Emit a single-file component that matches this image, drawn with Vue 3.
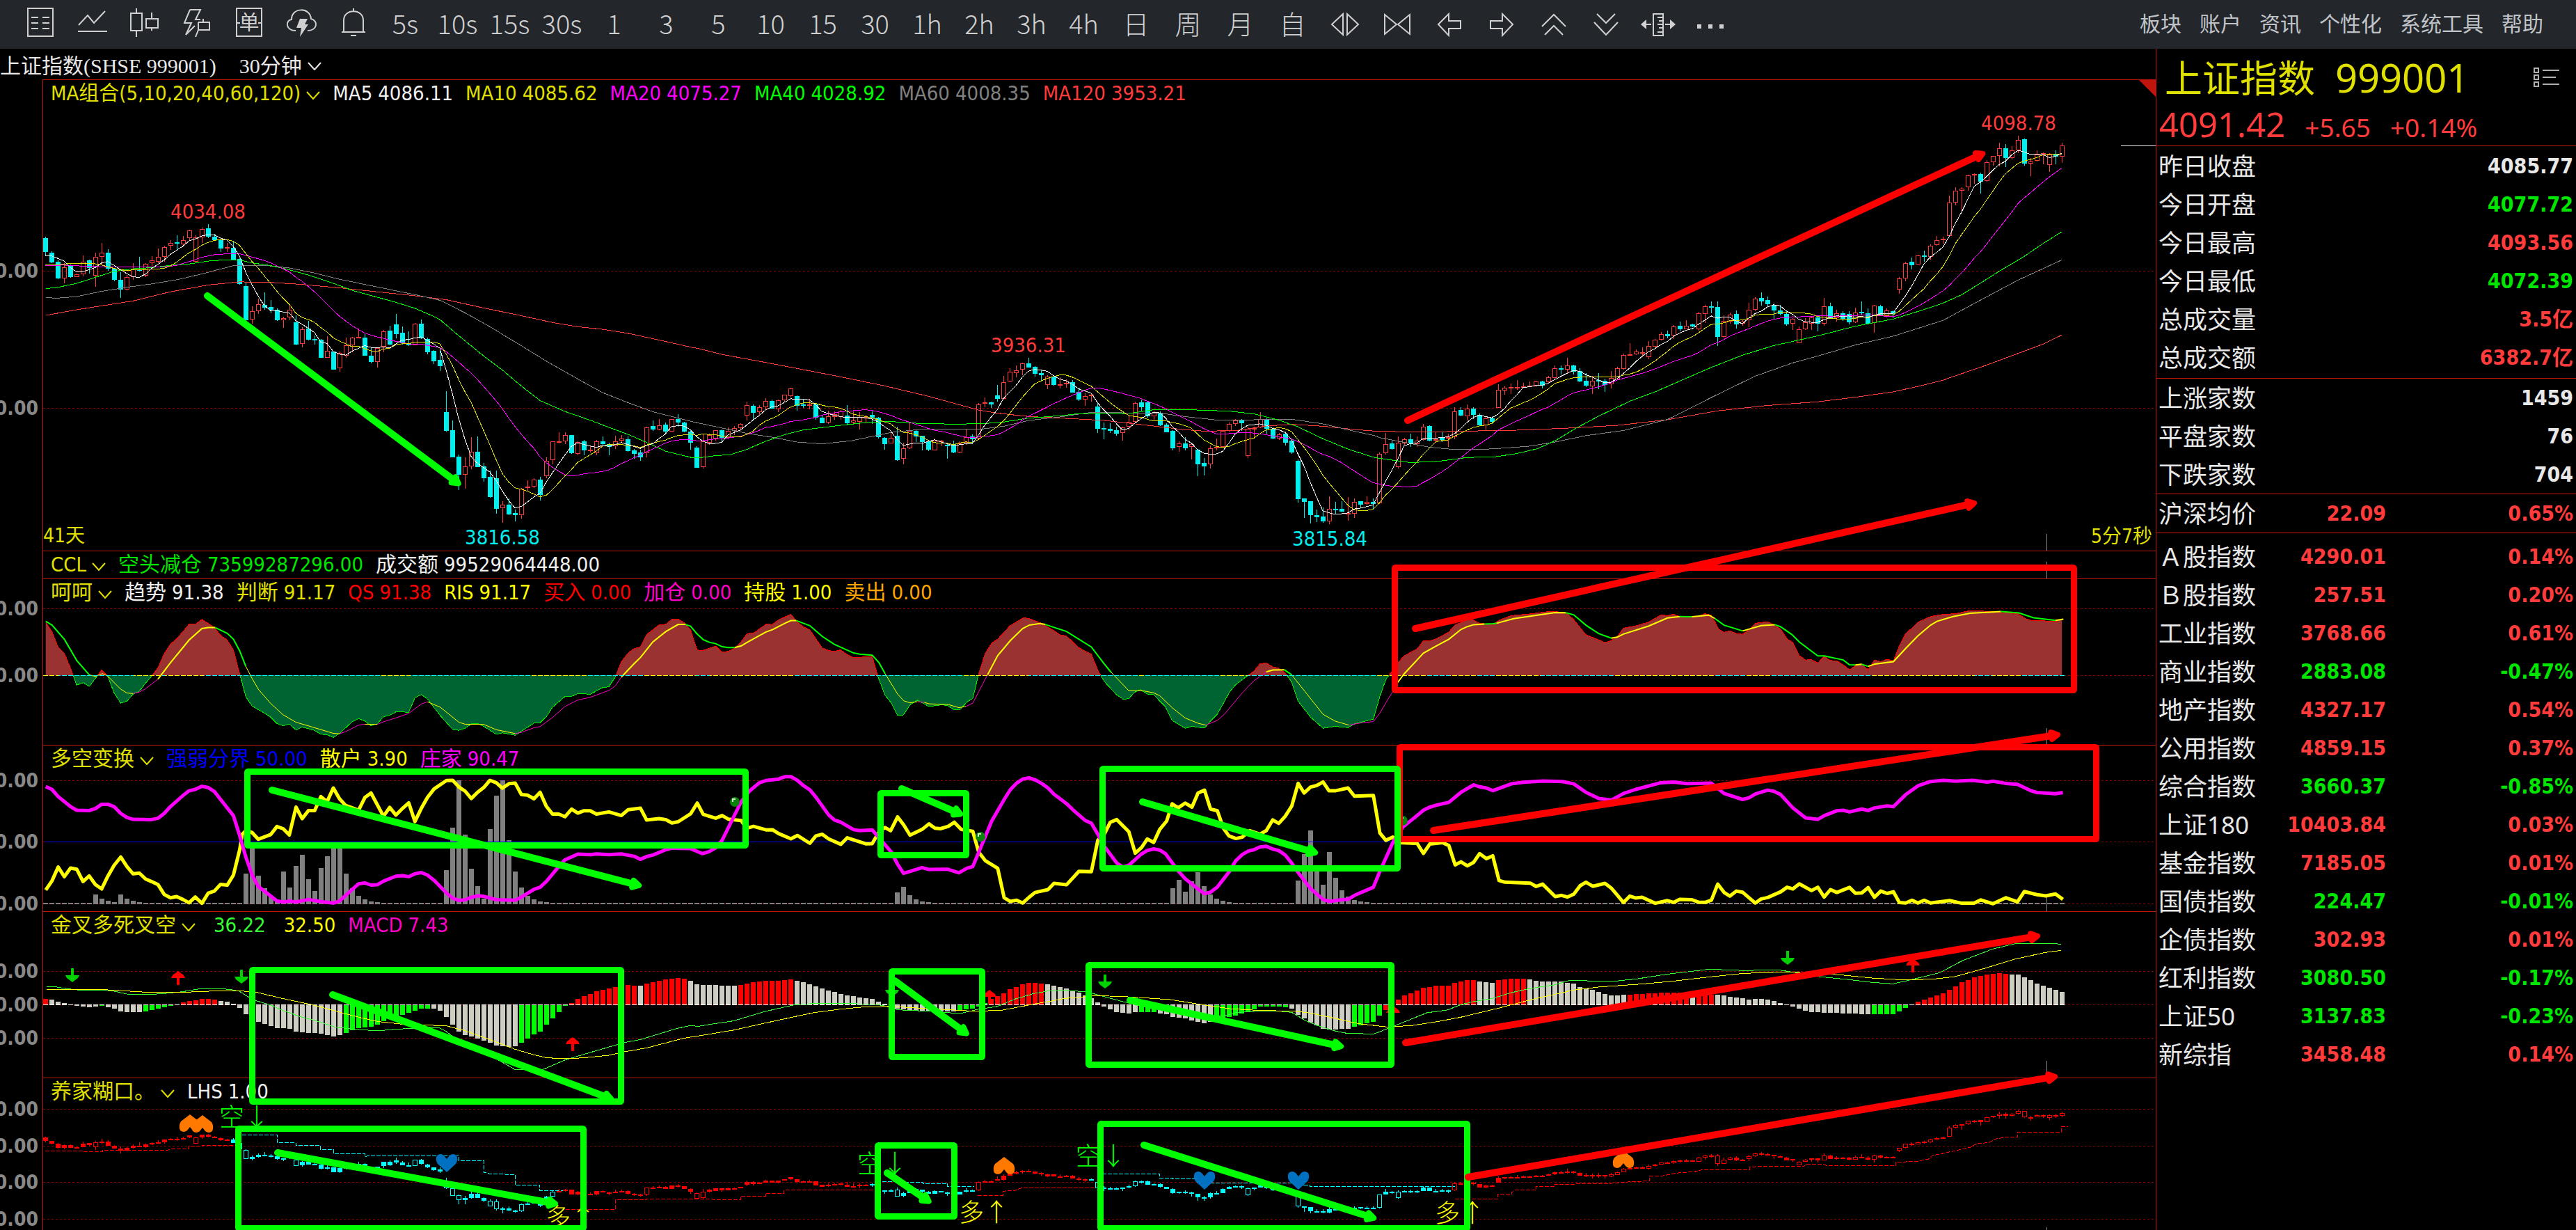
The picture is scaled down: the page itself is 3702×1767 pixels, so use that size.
<script setup>
const FIRST_X = 65
const STEP = 9

// Readings are stored in batches; each batch has its own origin and scale.
const batch = (x0, kx, y0, ky) => ({ x0, kx, y0, ky })
const priceA = batch(0, 0.6378, 160, 0.4082)
const priceB = batch(1000, 0.6378, 400, 0.3333)
const priceC = batch(1980, 0.7143, 160, 0.4082)
const oscA = batch(0, 0.6378, 780, 0.3444)
const oscB = batch(1000, 0.6633, 780, 0.3444)
const oscC = batch(2000, 0.7015, 780, 0.3444)
const lowA = batch(0, 0.8929, 1300, 0.3333)
const lowB = batch(1400, 1.0842, 1300, 0.3333)

const points = (b, text) =>
  text.trim().split(/\s+/).map((pair) => {
    const [x, y] = pair.split(',').map(Number)
    return [b.x0 + x * b.kx, b.y0 + y * b.ky]
  })
const join = (...parts) => parts.flatMap(([b, text]) => points(b, text))
const poly = (pts) => pts.map(([x, y]) => `${x.toFixed(1)},${y.toFixed(1)}`).join(' ')
const valueAt = (pts, x) => {
  if (x <= pts[0][0]) return pts[0][1]
  for (let i = 1; i < pts.length; i++) {
    if (x <= pts[i][0]) {
      const [xa, ya] = pts[i - 1]
      const [xb, yb] = pts[i]
      return xb === xa ? yb : ya + ((yb - ya) * (x - xa)) / (xb - xa)
    }
  }
  return pts[pts.length - 1][1]
}

// Candles: direction, high, body top, body bottom, low.
const readCandles = (b, text) =>
  text.trim().split(/\s*;\s*/).filter(Boolean).map((row) => {
    const [dir, ...v] = row.split(' ')
    const [high, top, bottom, low] = v.map((n) => b.y0 + Number(n) * b.ky)
    return { up: dir === 'U', high: Math.min(high, top), top, bottom, low: Math.max(low, bottom) }
  })

const candles = [
  ...readCandles(priceA, `
D 441 447 496 510;D 492 497 531 535;D 523 529 588 590;U 535 548 588 605;D 540 544 583 585;U 570 574 582 584;U 506 528 574 580;D 523 524 551 570;U 497 513 579 617;U 463 498 512 540;
D 486 498 553 560;D 552 554 594 598;D 567 593 626 657;U 575 582 626 629;U 535 556 582 593;D 512 557 562 563;U 533 536 579 584;U 510 525 534 545;U 483 513 530 533;U 473 477 513 528;
U 453 464 474 487;D 436 461 465 490;U 438 452 467 470;U 416 420 447 455;U 436 443 528 530;U 409 413 444 462;D 397 412 441 445;D 431 440 453 455;D 447 453 482 495;U 464 478 482 495;
D 458 479 522 523;D 517 519 608 610;D 600 615 735 737;U 685 704 732 747;U 658 679 702 714;D 637 680 691 697;D 665 689 699 710;D 694 698 735 738;U 722 727 734 762;U 684 697 725 735;
D 718 742 821 822;U 760 766 819 830;D 738 765 804 806;D 790 801 805 820;D 800 804 866 868;U 792 843 866 868;D 844 846 908 910;U 845 851 905 916;U 795 822 860 868;U 794 796 822 848;
U 765 794 797 798;D 785 797 859 861;D 832 860 882 888;U 838 832 883 902;U 769 773 829 848;D 755 772 820 822;D 714 750 783 798;D 756 779 816 820;D 775 817 822 826;U 744 746 822 824;
D 733 746 799 802;D 797 802 847 854;D 840 843 879 890;D 840 875 896 914;D 984 1058 1124 1127;D 1088 1122 1217 1218;D 1207 1214 1280 1333;U 1218 1250 1279 1328;U 1147 1197 1250 1260;D 1143 1197 1251 1253;
D 1237 1250 1290 1303;D 1265 1286 1358 1360;D 1263 1291 1398 1415;U 1372 1383 1397 1447;D 1363 1384 1419 1422;D 1401 1414 1422 1443;U 1325 1329 1422 1433;U 1298 1321 1325 1338;U 1290 1295 1321 1325;D 1287 1297 1350 1369;
U 1217 1231 1283 1290;U 1160 1162 1228 1243;U 1129 1160 1165 1168;U 1130 1140 1161 1170;D 1138 1140 1204 1206;U 1160 1163 1205 1210;D 1156 1161 1194 1210;U 1175 1190 1194 1200;U 1157 1160 1203 1209;D 1143 1160 1172 1175;
D 1165 1172 1180 1209;U 1142 1162 1179 1188;U 1138 1152 1159 1168;D 1143 1154 1195 1198;D 1188 1194 1205 1223;D 1191 1201 1217 1231;U 1110 1112 1203 1217;D 1088 1107 1119 1124;U 1084 1105 1119 1122;D 1096 1103 1127 1131;
U 1083 1084 1126 1127;D 1066 1084 1095 1110;D 1092 1094 1127 1129;D 1122 1126 1165 1190`),
  ...readCandles(priceB, `
D 723 729 815 816;U 668 703 812 818;U 668 676 707 718;U 653 655 691 700;D 652 654 686 705;U 643 656 688 690;
U 637 646 656 675;U 624 626 644 655;U 531 547 592 613;D 543 549 578 608;U 545 556 575 587;U 517 529 556 565;D 523 528 560 562;U 522 526 563 575;U 500 502 524 530;U 470 475 506 513;
D 505 507 548 570;D 523 542 549 557;U 519 543 548 565;D 540 542 601 608;D 590 600 624 625;U 570 595 622 628;U 573 586 596 608;U 568 572 597 608;D 546 591 624 632;U 572 613 620 630;
U 575 597 617 650;U 587 597 600 622;D 573 588 601 628;D 597 600 684 690;D 685 687 713 737;U 663 688 710 712;D 639 678 783 786;U 708 731 778 800;U 622 657 731 735;D 655 657 681 705;
D 677 678 704 740;D 700 703 737 744;U 690 699 740 742;U 695 700 704 722;D 710 717 722 776;D 700 713 749 753;U 703 712 749 752;U 650 683 709 718;D 672 682 693 713;U 538 544 690 695;
U 513 534 539 555;D 531 534 542 558;D 459 504 518 530;U 421 448 518 522;U 387 403 445 447;U 374 397 407 425;U 362 367 392 416;D 342 366 383 385;D 378 381 410 422;D 393 408 417 443;
U 418 424 460 476;D 420 423 459 462;U 425 457 461 473;U 436 449 457 470;D 438 447 491 493;D 470 490 521 527;U 495 508 521 548;U 498 502 506 530;D 537 553 648 665;D 622 645 651 692;
D 624 648 656 666;D 640 654 668 678;U 640 641 667 698;U 590 619 640 653;U 532 538 619 625;D 522 535 556 570;D 532 534 593 600;U 570 578 593 609;D 573 580 632 636;D 623 630 662 663;
D 655 657 732 740;U 702 710 727 747;D 683 711 731 742;U 708 714 727 781;D 736 738 801 852;D 775 795 809 849;U 720 733 802 819;U 691 725 733 740;U 655 658 727 730;U 622 626 657 660;
U 606 613 627 637;D 605 613 623 657;U 640 647 764 773;U 640 645 648 684;U 576 606 641 645;D 603 609 647 668;D 642 647 690 693;U 667 673 691 696;D 660 669 708 720;D 690 699 750 756;
D 780 786 950 966;D 948 949 963 1031;D 959 961 1020 1056;D 995 1020 1028 1049;D 987 1026 1047 1052;U 939 993 1046 1058;D 963 993 998 1015;D 960 993 1005 1008;U 942 1011 1016 1043;U 948 962 1013 1031;
D 961 961 975 990;U 939 964 973 977;D 948 963 972 992;U 750 755 968 973`),
  ...readCandles(priceC, `
U 1132 1170 1202 1207;D 1157 1169 1188 1191;U 1144 1166 1251 1257;U 1149 1155 1168 1174;D 1134 1154 1169 1181;U 1145 1158 1171 1181;
U 1100 1109 1156 1158;D 1106 1107 1159 1160;U 1127 1155 1159 1165;D 1126 1146 1157 1164;U 1134 1147 1151 1180;U 1041 1055 1147 1153;D 1040 1051 1071 1073;U 1031 1046 1072 1088;D 1041 1046 1068 1082;D 1062 1068 1106 1107;
U 1075 1080 1106 1122;D 1072 1080 1093 1100;U 960 979 1043 1044;U 968 972 982 997;U 958 971 973 994;U 946 970 973 979;U 955 967 970 972;U 950 966 968 970;U 947 950 966 970;D 948 950 964 976;
U 930 937 952 958;U 894 905 939 941;D 893 904 908 925;U 866 895 909 922;D 892 894 915 925;D 905 914 950 952;D 920 948 965 971;U 930 948 967 994;D 921 946 951 978;D 941 948 962 987;
U 914 939 960 974;U 898 903 942 944;U 853 858 906 909;U 816 855 858 860;U 837 846 856 858;U 831 847 850 865;U 808 825 864 873;U 800 804 827 830;U 777 783 803 805;D 771 783 791 798;
U 752 756 789 801;D 741 755 767 774;U 734 754 766 768;D 748 750 757 759;U 706 711 766 772;U 681 687 714 745;D 669 685 690 710;D 670 688 794 826;U 718 738 793 795;U 708 715 740 748;
D 700 714 750 764;U 732 740 748 755;U 674 697 734 759;U 653 658 697 703;D 637 657 669 684;D 652 664 679 686;D 677 680 700 733;D 682 700 714 717;D 703 713 749 755;U 728 729 746 770;
U 757 766 815 816;U 728 743 768 770;U 720 725 746 769;D 720 724 748 774;U 657 685 748 755;D 674 685 729 731;U 697 711 728 740;D 702 710 733 737;D 702 713 742 750;U 690 708 743 745;
D 669 706 709 715;D 693 710 746 750;U 680 683 744 779;D 680 685 717 720;U 694 701 720 725;D 700 703 713 727;U 582 589 626 642;U 530 533 587 598;D 514 530 541 556;U 505 507 538 540;
D 489 506 512 530;U 468 472 511 523;U 438 452 471 474;U 440 448 452 468;U 296 321 438 440;U 268 280 320 331;U 268 271 280 349;U 222 226 268 280;U 219 221 226 255;D 216 220 247 289;
U 172 180 246 248;U 157 158 180 191;U 110 130 158 194;D 115 131 163 197;U 122 136 163 168;U 86 101 136 147;D 96 97 183 191;U 163 177 183 228;U 138 152 175 176;U 144 148 153 186;
U 147 153 188 212;D 137 150 160 186;U 110 121 160 181`),
]

const candleShape = (i, c, hollow) => {
  const x = FIRST_X + STEP * i
  const t = Math.round(c.top)
  const h = Math.max(2, Math.round(c.bottom) - t)
  const wick = `M${x + 0.5} ${Math.round(c.high)}V${t}M${x + 0.5} ${t + h}V${Math.round(c.low)}`
  return hollow
    ? { wick, body: `M${x - 2.5} ${t + 0.5}h6v${h - 1}h-6z` }
    : { wick, body: `M${x - 3} ${t}h7v${h}h-7z` }
}
const collect = (list) => ({
  wick: list.map((s) => s.wick).join(''),
  body: list.map((s) => s.body).join(''),
})
const shapes = candles.map((c, i) => ({ c, i, ...candleShape(i, c, c.up) }))
const rising = collect(shapes.filter((s) => s.c.up))
const falling = collect(shapes.filter((s) => !s.c.up))

// The bottom pane repeats the candles on a compressed scale, coloured by trend.
const squash = (y) => 1543 + y * 0.2658
const bearish = (i) => (i >= 30 && i <= 81) || (i >= 132 && i <= 148) || (i >= 167 && i <= 224)
const trend = candles.map((c, i) => {
  const s = { up: c.up, high: squash(c.high), top: squash(c.top), bottom: squash(c.bottom), low: squash(c.low) }
  const hollow = s.bottom - s.top > 7 || (i > 245 && c.up)
  return { hollow, cold: bearish(i), ...candleShape(i, s, hollow) }
})
const trendSets = [
  { color: '#ff0000', fill: 'none', ...collect(trend.filter((t) => !t.cold && t.hollow)) },
  { color: '#ff0000', fill: '#ff0000', ...collect(trend.filter((t) => !t.cold && !t.hollow)) },
  { color: '#00ffff', fill: 'none', ...collect(trend.filter((t) => t.cold && t.hollow)) },
  { color: '#00ffff', fill: '#00ffff', ...collect(trend.filter((t) => t.cold && !t.hollow)) },
]

const closes = candles.map((c) => (c.up ? c.top : c.bottom))
const average = (n, lead) => {
  const start = points(priceA, lead)
  return poly(closes.map((_, i) => {
    const x = FIRST_X + STEP * i
    if (i < n - 1) return [x, valueAt(start, x)]
    let sum = 0
    for (let k = i - n + 1; k <= i; k++) sum += closes[k]
    return [x, sum / n]
  }))
}
const averages = [
  { color: '#ff3b3b', pts: poly(join(
    [priceA, '103,718 173,698 300,667 384,635 469,611 540,600 610,602 680,609 765,621 850,635 935,649 1006,663 1090,692 1160,714 1245,743 1302,758 1358,767 1415,781 1500,810 1560,831'],
    [priceB, '3,301 60,328 143,357 228,388 326,424 425,463 524,508 637,567 680,581 750,595 863,606 920,612 1018,633 1100,652 1145,658 1216,656 1286,636 1343,629 1413,637 1484,651 1530,658'],
    [priceC, '3,1126 104,1129 155,1126 280,1122 381,1115 482,1105 583,1085 684,1054 784,1035 885,1022 961,1006 1037,987 1087,968 1137,946 1150,938 1225,893 1288,852 1340,818 1376,787'])) },
  { color: '#808080', pts: poly(join(
    [priceA, '103,656 131,657 173,652 229,633 286,619 342,607 400,592 455,572 526,543 596,542 652,551 709,569 765,591 822,609 878,627 935,645 992,665 1048,709 1104,758 1175,825 1231,879 1302,942 1358,990 1415,1025 1471,1057 1560,1092'],
    [priceB, '3,622 60,645 115,668 171,684 228,705 284,713 350,700 397,681 440,664 510,650 637,651 694,637 750,612 820,597 891,577 990,580 1046,581 1110,597 1173,610 1258,609 1343,607 1413,627 1484,659 1535,680'],
    [priceC, '3,1148 54,1165 104,1182 155,1190 205,1190 255,1185 306,1178 356,1164 419,1141 495,1123 583,1084 621,1052 671,1007 759,932 835,885 885,861 961,822 1037,791 1137,736 1213,664 1288,594 1376,523'])) },
  { color: '#00ff00', pts: poly(join(
    [priceA, '103,624 131,619 173,605 215,584 257,563 300,554 342,550 384,542 426,537 469,527 512,522 540,523 568,533 610,543 638,552 695,576 751,605 794,630 850,654 892,672 935,693 978,722 992,734 1034,790 1090,861 1132,910 1175,967 1217,1018 1273,1056 1330,1087 1372,1112 1415,1137 1457,1165 1500,1196 1560,1219'],
    [priceB, '3,774 40,765 78,759 115,737 157,702 200,673 242,653 284,643 340,630 397,619 440,617 510,626 595,628 680,623 750,602 820,592 863,583 976,582 1032,566 1110,566 1201,572 1258,584 1314,611 1357,640 1413,691 1470,736 1526,770'],
    [priceC, '3,1221 66,1236 120,1232 180,1218 235,1216 280,1204 322,1187 360,1156 400,1114 444,1073 507,1020 558,987 621,939 671,901 734,858 797,824 885,790 961,756 1037,731 1087,704 1137,675 1175,645 1213,604 1250,563 1300,511 1340,463 1376,424'])) },
  { color: '#ff00ff', pts: average(20, '103,543 145,541 190,545 243,547 370,548') },
  { color: '#e0e000', pts: average(10, '103,541 145,537 173,535 229,537') },
  { color: '#f0f0f0', pts: average(5, '103,508 117,509 131,518 150,530') },
]

// Oscillator pane.
const fast = join(
  [oscA, '103,330 117,370 131,434 145,460 159,522 173,593 187,583 201,598 215,565 229,530 243,556 257,625 272,668 286,660 300,630 314,618 328,585 342,555 356,520 370,462 384,422 398,400 412,370 426,339 440,339 455,319 469,335 483,352 497,385 512,405 526,446 540,545 554,642 568,680 596,710 610,727 624,753 638,763 652,755 667,780 681,768 709,782 723,798 737,800 751,811 765,795 794,745 808,733 822,743 836,762 850,755 864,725 878,719 892,705 921,706 935,646 949,632 963,650 992,720 1020,778 1034,782 1048,773 1062,755 1076,753 1090,765 1118,798 1132,792 1161,802 1175,785 1203,752 1217,750 1231,725 1245,685 1273,641 1288,640 1302,628 1330,631 1358,603 1372,600 1386,560 1400,495 1415,460 1429,440 1443,434 1457,382 1485,342 1500,339 1514,319 1528,318 1542,333 1556,362'],
  [oscB, '3,447 16,448 43,430 57,456 70,452 84,440 98,412 111,378 125,376 152,339 166,340 179,321 206,297 220,330 233,350 247,363 274,438 288,449 300,452 314,446 328,466 342,479 382,473 395,560 410,636 424,668 437,720 450,717 464,675 480,656 505,682 534,675 547,680 560,697 573,694 587,664 600,648 613,545 627,460 641,418 654,401 681,345 710,312 722,315 750,336 775,365 790,384 803,388 830,437 857,464 871,530 885,578 912,634 925,651 938,650 950,623 963,612 978,630 992,633 1018,685 1032,740 1060,773 1075,765 1102,772 1115,743 1130,714 1157,620 1170,590 1195,555 1209,535 1222,505 1236,500 1250,517 1263,522 1277,543 1291,580 1305,660 1332,727 1359,773 1385,765 1413,770 1427,755 1468,735 1482,640 1495,570 1510,530'],
  [oscC, '13,500 26,470 52,442 65,408 78,409 91,400 117,372 129,343 155,320 168,322 180,335 207,340 220,322 245,303 284,296 322,286 348,288 360,295 373,320 398,383 437,415 450,407 462,390 475,355 500,346 526,330 552,300 565,303 578,297 590,308 628,307 642,295 655,302 670,360 681,373 693,366 706,378 719,381 732,362 745,335 770,328 783,342 797,360 810,400 822,415 835,470 848,488 860,487 873,501 886,473 898,490 912,492 925,508 938,529 950,512 963,505 976,529 989,488 1002,495 1015,485 1028,492 1040,430 1053,378 1066,355 1078,330 1104,307 1130,298 1155,295 1180,284 1205,284 1232,286 1258,292 1282,294 1296,313 1309,323 1360,327 1373,318'],
)
const fastLine = poly(fast)
const fastArea = `${poly([[fast[0][0], 970]])} ${fastLine} ${poly([[fast[fast.length - 1][0], 970]])}`

const GREEN = '#00ff00'
const YELLOW = '#ffff00'
const PINK = '#ff00c8'
const slow = [
  [oscA, [
    [GREEN, 2, '103,327 117,342 145,402 173,490 201,550'],
    [YELLOW, 1, '201,550 215,557 231,545 243,556 272,610 286,626 300,628'],
    [PINK, 1, '300,628 314,622 328,608 356,568'],
    [YELLOW, 2, '356,568 384,500 426,405 455,357 469,353 485,353'],
    [GREEN, 2, '485,353 512,377 526,402 540,450 554,515'],
    [YELLOW, 1, '554,515 568,565 582,610 610,670 638,717 667,748 695,763 751,794 765,796'],
    [PINK, 1, '765,796 779,787 808,760 822,756'],
    [YELLOW, 1, '822,756 850,757'],
    [PINK, 1, '850,757 864,746 892,730 921,711 949,672 963,663'],
    [YELLOW, 1, '963,663 992,685 1034,748 1048,756 1090,757 1118,779 1161,795'],
    [PINK, 1, '1161,795 1175,790 1203,771 1217,766 1245,728 1273,682 1302,655 1330,644 1372,615 1386,597 1400,560'],
    [YELLOW, 2, '1400,560 1410,540 1429,503 1443,478 1471,413 1500,370 1528,340 1544,340'],
    [GREEN, 2, '1544,340 1556,347 1570,378'],
  ]],
  [oscB, [
    [GREEN, 2, '0,375 16,403 30,415 43,420 57,433 70,436 84,436'],
    [YELLOW, 2, '84,436 98,430 111,415 152,371 166,362 193,335 206,324 218,324'],
    [GREEN, 2, '218,324 247,345 274,390 300,423 342,459 355,464 382,468 397,500 410,545'],
    [YELLOW, 1, '410,545 437,630 450,658 464,667 480,662'],
    [PINK, 1, '480,662 495,665'],
    [YELLOW, 1, '495,665 505,671 547,674 570,687 585,682'],
    [PINK, 1, '585,682 600,668 613,620 632,550'],
    [YELLOW, 2, '632,550 654,470 681,408 708,357 722,343 745,336 757,340'],
    [GREEN, 2, '757,340 803,369 857,434 885,505 900,540'],
    [YELLOW, 1, '900,540 938,616 970,617 992,625 1005,637 1032,687 1060,730 1088,752 1105,760'],
    [PINK, 1, '1105,760 1130,740 1145,715 1184,625 1209,575 1236,538'],
    [YELLOW, 2, '1236,538 1250,530 1275,529'],
    [GREEN, 2, '1275,529 1291,550'],
    [YELLOW, 1, '1291,550 1359,715 1385,743 1415,760'],
    [PINK, 1, '1415,760 1440,751 1468,745 1482,710 1500,650 1520,590'],
  ]],
  [oscC, [
    [YELLOW, 2, '10,588 26,545 52,488 65,460 91,430 117,402 142,361 155,349 168,341 190,338'],
    [GREEN, 2, '190,338 207,337 215,335'],
    [YELLOW, 2, '215,335 250,316 310,298 335,290 357,291'],
    [GREEN, 2, '357,291 373,300 398,343 424,378 450,397'],
    [YELLOW, 2, '450,397 462,393 475,380 526,347 565,313 590,307'],
    [GREEN, 2, '590,307 615,308'],
    [YELLOW, 2, '615,308 650,301 662,315'],
    [GREEN, 2, '662,315 681,343 719,367'],
    [YELLOW, 2, '719,367 757,345 785,341'],
    [GREEN, 2, '785,341 797,350 820,382 835,413 873,471 886,471 925,488 938,508 950,509'],
    [YELLOW, 2, '950,509 963,506'],
    [GREEN, 2, '963,506 976,515'],
    [YELLOW, 2, '976,515 990,505 1028,495 1053,440 1078,388 1104,343 1117,327 1150,307 1185,293 1248,286'],
    [GREEN, 2, '1248,286 1285,292 1315,312 1360,323'],
    [YELLOW, 2, '1360,323 1376,318'],
  ]],
].flatMap(([b, list]) => list.map(([color, width, text]) => ({ color, width, pts: poly(points(b, text)) })))

const zeroWarm = [
  [62, 84], [192, 232], [237, 293], [547, 590], [764, 845], [925, 1000], [1020, 1140], [1385, 1478],
  [1637, 1644], [1753, 1793], [1978, 2049], [2084, 2123], [2150, 2214], [2321, 2463], [2510, 2544], [2691, 2838], [2863, 2905],
]

// Long / short crossover pane.
const crowd = poly(join(
  [oscA, '103,1448 117,1410 131,1352 145,1392 159,1356 173,1361 187,1412 201,1389 215,1425 229,1443 243,1390 257,1345 272,1310 286,1350 300,1380 314,1377 328,1402 342,1413 356,1425 370,1466 384,1480 398,1475 412,1487 426,1501 440,1477 455,1503 469,1461 483,1452 497,1424 512,1427 526,1385 540,1280 546,1215 554,1200 568,1208 582,1236 610,1216 624,1183 638,1192 652,1218 667,1102 681,1150 695,1116 709,1116 723,1058 737,1079 751,1022 765,1067 779,1095 808,1115 822,1062 836,1043 864,1140 878,1103 892,1135 907,1107 921,1084 935,1162 949,1108 963,1062 978,1026 1006,991 1020,990 1034,1018 1048,1035 1062,1066 1076,1040 1090,1020 1104,990 1118,1000 1132,1023 1147,1004 1161,1002 1175,1050 1189,1052 1203,1067 1217,1040 1231,1098 1245,1131 1259,1131 1273,1142 1288,1110 1302,1127 1316,1117 1330,1117 1344,1131 1372,1122 1400,1137 1415,1113 1443,1106 1457,1156 1485,1150 1500,1154 1514,1168 1528,1163 1556,1130'],
  [oscB, '3,1085 16,1132 43,1148 57,1137 70,1152 98,1158 110,1190 125,1182 152,1197 166,1196 179,1212 206,1234 220,1220 247,1253 260,1222 274,1215 288,1235 314,1257 328,1230 368,1255 382,1254 397,1205 410,1187 422,1200 437,1143 450,1175 464,1219 490,1195 505,1172 518,1190 530,1192 547,1182 560,1165 575,1195 600,1203 613,1290 627,1325 654,1357 668,1480 681,1495 695,1490 708,1502 722,1478 735,1458 763,1446 776,1420 803,1426 830,1370 857,1371 871,1240 885,1215 898,1165 912,1154 938,1204 952,1294 966,1270 978,1235 992,1249 1005,1195 1020,1160 1032,1088 1045,1105 1060,1085 1075,1102 1088,1043 1102,1031 1115,1110 1130,1117 1143,1190 1155,1222 1170,1233 1184,1227 1200,1200 1222,1215 1236,1200 1250,1155 1263,1170 1277,1140 1291,1098 1305,1003 1318,1043 1332,1018 1345,1012 1359,997 1372,1034 1385,1034 1413,1022 1427,1056 1468,1053 1482,1210 1495,1240 1510,1227'],
  [oscC, '13,1250 52,1253 65,1295 78,1256 104,1250 117,1262 130,1343 142,1330 155,1347 168,1332 180,1296 194,1317 207,1305 220,1408 232,1415 284,1419 296,1433 309,1423 335,1475 348,1470 360,1477 373,1465 386,1430 398,1415 412,1432 437,1420 450,1440 475,1500 488,1473 500,1481 513,1478 540,1503 565,1492 578,1499 590,1487 615,1488 628,1498 642,1499 655,1490 668,1423 681,1458 693,1473 706,1452 719,1457 745,1502 757,1485 770,1479 797,1455 810,1436 822,1443 835,1422 860,1450 873,1436 886,1477 899,1446 912,1458 938,1437 950,1461 963,1460 976,1438 989,1478 1002,1452 1015,1462 1028,1455 1040,1500 1053,1502 1066,1490 1078,1502 1091,1490 1104,1502 1117,1498 1143,1492 1168,1503 1193,1503 1207,1489 1232,1505 1258,1480 1282,1497 1296,1454 1322,1467 1340,1472 1360,1464 1375,1487'],
))
const banker = poly(join(
  [oscA, '103,1016 117,1028 131,1058 159,1100 173,1115 201,1116 215,1108 229,1090 243,1090 257,1100 272,1128 286,1145 300,1153 342,1154 356,1148 370,1128 384,1100 412,1054 426,1034 440,1028 455,1015 469,1020 483,1037 497,1070 526,1138 540,1220 554,1310 568,1385 582,1433 610,1473 624,1493 638,1498 652,1494 667,1498 695,1487 723,1496 751,1502 765,1494 779,1470 794,1445 808,1422 822,1418 836,1427 850,1426 864,1411 892,1390 907,1388 921,1392 935,1380 949,1375 963,1385 978,1407 1006,1460 1020,1482 1034,1491 1048,1489 1062,1478 1076,1472 1090,1474 1118,1488 1161,1490 1175,1477 1203,1445 1217,1436 1231,1412 1259,1350 1273,1322 1302,1298 1330,1300 1344,1297 1372,1300 1400,1297 1429,1307 1443,1320 1457,1308 1471,1302 1500,1280 1514,1273 1556,1275'],
  [oscB, '14,1296 28,1288 43,1272 57,1240 98,1080 116,1035 138,1000 152,991 166,988 179,985 193,975 206,975 220,990 233,1012 247,1030 260,1060 288,1135 300,1155 314,1165 342,1196 355,1200 382,1197 397,1230 424,1290 437,1340 450,1378 464,1370 490,1354 505,1362 545,1361 570,1376 587,1357 600,1350 613,1290 641,1160 668,1070 681,1030 695,1002 708,985 722,980 735,988 749,1003 763,1022 776,1048 803,1087 817,1113 844,1158 857,1169 871,1215 885,1265 912,1335 925,1352 938,1345 965,1298 978,1283 992,1276 1005,1281 1018,1297 1045,1368 1060,1400 1088,1443 1102,1463 1115,1457 1130,1435 1157,1368 1170,1325 1184,1300 1197,1285 1209,1280 1222,1268 1236,1265 1250,1277 1263,1283 1277,1302 1291,1335 1305,1375 1332,1442 1359,1487 1372,1495 1400,1488 1413,1487 1427,1470 1468,1436 1482,1370 1510,1250'],
  [oscC, '23,1185 52,1137 65,1115 78,1102 91,1094 117,1082 142,1040 168,1009 180,1017 194,1022 207,1033 245,1005 270,998 310,993 350,995 373,1005 398,1040 424,1066 450,1073 475,1045 500,1028 552,1000 578,997 605,1004 655,1002 681,1045 719,1070 732,1063 745,1047 770,1031 783,1036 797,1050 822,1105 848,1147 873,1153 886,1138 912,1117 925,1115 938,1122 963,1110 976,1116 989,1105 1015,1097 1028,1100 1053,1050 1078,1013 1104,995 1130,990 1155,994 1190,990 1220,997 1232,994 1258,1003 1282,1007 1309,1033 1322,1041 1360,1046 1375,1041'],
))
const volumeRuns = {
  8: [1466, 1484, 1493, 1497, 1466, 1484, 1493, 1498],
  32: [1380, 1265, 1388, 1440, 1473, 1490, 1371, 1437, 1347, 1301, 1401, 1452, 1356, 1307, 1270, 1270, 1379, 1441, 1472, 1488, 1495, 1498],
  64: [1365, 1188, 991, 1217, 1359, 1432, 1483, 1193, 1054, 990, 1240, 1371, 1437, 1472, 1487, 1495, 1498],
  136: [1458, 1434, 1469, 1486, 1495, 1498],
  180: [1440, 1405, 1455, 1411, 1372, 1432, 1467, 1484, 1493, 1498],
  200: [1408, 1298, 1199, 1350, 1426, 1289, 1397, 1449, 1476, 1490, 1495, 1498],
}
const volumeBars = Object.entries(volumeRuns).flatMap(([start, list]) =>
  list.map((top, k) => {
    const y = Math.round(780 + top * 0.3444)
    return `M${FIRST_X - 3 + STEP * (Number(start) + k)} ${y}h7V1298h-7z`
  })).join('')

// MACD pane.
const macd = join(
  [lowA, '73,405 83,408 93,417 103,423 113,430 123,436 143,440 163,434 173,440 184,447 194,458 204,461 224,461 234,458 244,453 264,441 274,434 284,428 294,420 304,415 325,405 335,405 345,408 355,414 365,417 375,426 386,446 396,473 406,495 416,504 426,513 446,531 466,534 476,546 496,551 516,556 537,567 547,560 557,551 567,540 577,531 597,524 607,515 617,500 637,480 657,467 667,455 677,446 697,448 707,453 717,480 727,513 737,543 748,560 758,566 778,585 798,605 818,611 828,609 838,594 848,578 858,560 868,548 878,521 888,491 898,465 908,438 919,424 929,405 949,384 959,372 979,360 999,350 1009,345 1030,348 1040,339 1060,328 1080,317 1090,315 1100,318 1110,324 1120,342 1130,345 1180,348 1190,345 1200,339 1221,330 1231,327 1251,327 1271,321 1281,327 1301,339 1321,360 1341,375 1361,390 1381,397 1401,404 1411,414 1421,425 1431,433 1441,448 1461,452 1491,458 1542,458 1552,452 1562,448'],
  [lowB, '5,440 13,424 22,404 30,395 38,382 46,366 63,342 71,336 87,338 96,342 121,360 137,377 154,400 162,418 171,437 187,460 204,470 212,463 237,463 254,470 263,483 279,490 304,510 313,505 329,490 346,478 363,458 379,439 404,437 421,448 429,474 446,508 462,533 471,537 495,533 504,525 520,510 529,503 537,477 545,452 553,435 562,408 570,390 578,380 595,357 612,348 628,348 637,336 653,324 662,324 670,330 687,336 695,324 712,318 728,318 737,322 753,330 778,330 795,340 803,354 820,366 837,385 845,391 853,390 870,386 903,381 912,378 937,378 953,382 978,386 995,392 1011,400 1028,408 1045,404 1061,415 1078,432 1095,450 1111,462 1128,464 1153,467 1186,472 1220,470 1236,440 1245,426 1261,405 1286,378 1311,330 1328,310 1345,299 1358,294 1370,299 1383,299 1395,315 1408,338 1420,352 1433,366 1441,375'],
)
const R = '#ff0000'
const S = '#cdcdc1'
const G = '#00ff00'
const shades = [
  [0, R], [71, S], [142, G], [150, S], [203, G], [252, R], [315, S], [493, G], [616, S], [744, G], [816, R], [917, S], [925, R],
  [989, S], [1058, R], [1142, S], [1376, G], [1417, R], [1502, S], [1636, G], [1666, S], [1743, G], [1855, S], [1942, G], [1991, R],
  [2122, S], [2149, R], [2196, S], [2337, R], [2430, S], [2438, R], [2463, S], [2689, G], [2744, R], [2888, S],
]
const macdBars = [R, S, G].map((color) => ({
  color,
  d: candles.map((_, i) => {
    const x = FIRST_X + STEP * i
    const shade = shades.filter(([from]) => from <= x).pop()[1]
    if (shade !== color) return ''
    const y = Math.round(valueAt(macd, x))
    return `M${x - 3} 1443h7V${y}h-7z`
  }).join(''),
}))
const diff = poly(join(
  [lowA, '75,352 90,353 105,360 123,366 168,368 184,372 204,384 234,387 264,382 294,374 320,362 345,360 370,364 385,372 396,390 406,408 436,432 456,456 486,484 507,498 540,527 567,535 607,543 637,536 667,531 690,527 708,531 718,545 735,580 760,606 790,650 828,708 850,711 875,708 910,668 960,628 1005,593 1030,581 1090,532 1110,521 1125,523 1150,512 1180,500 1230,460 1280,430 1310,425 1380,426 1405,427 1425,436 1445,452 1470,455 1500,459 1545,468'],
  [lowB, '5,450 30,438 55,405 79,382 100,370 121,368 150,375 170,393 195,415 230,442 260,460 300,475 330,480 346,465 379,457 404,458 421,463 440,500 455,520 480,545 495,554 530,556 545,537 562,515 600,465 628,452 645,430 660,418 687,403 712,378 737,360 770,344 790,325 845,330 880,318 920,298 975,277 1020,283 1065,280 1095,294 1110,306 1160,322 1190,334 1218,340 1240,324 1280,292 1310,240 1350,190 1380,167 1425,166 1441,169'],
))
const dea = poly(join(
  [lowA, '75,364 168,365 204,371 234,376 300,376 345,371 390,371 415,378 456,404 507,433 567,477 607,502 650,515 718,521 748,542 788,580 828,621 858,645 880,659 910,663 940,659 980,648 1005,633 1040,617 1100,575 1130,562 1180,540 1230,510 1275,484 1310,464 1350,450 1385,441 1430,437 1490,446 1562,457'],
  [lowB, '5,458 38,453 80,427 121,403 162,391 204,396 260,408 304,431 338,447 379,455 421,457 446,466 480,490 510,512 547,526 580,520 612,504 645,484 695,445 745,403 795,367 830,353 880,342 920,331 970,312 1020,295 1080,289 1110,293 1150,302 1190,315 1232,323 1270,320 1300,309 1340,273 1380,233 1420,205 1441,196'],
))
const signals = [
  [104, 1391, 'down'], [347, 1393, 'down'], [1282, 1412, 'down'], [1588, 1400, 'down'], [2569, 1366, 'down'],
  [256, 1395, 'up'], [823, 1490, 'up'], [1422, 1422, 'up'], [2002, 1445, 'up'], [2749, 1377, 'up'],
]

// Trend pane: stop lines, marks and captions.
const stops = [
  ['#ff0000', lowA, '73,1060 133,1060 133,1063 165,1063 165,1057 270,1057 275,1051 304,1051 304,1039 325,1039 325,1036 376,1036'],
  ['#00ffff', lowA, '390,991 446,991 446,1024 476,1024 476,1036 516,1036 516,1054 537,1054 537,1072 587,1072 587,1084 597,1081 738,1081 738,1102 779,1102 779,1153 790,1160 829,1162 829,1207 869,1207 869,1230 908,1230'],
  ['#ff0000', lowA, '910,1311 990,1311 990,1270 1040,1270 1040,1267 1140,1267 1150,1270 1192,1270 1192,1257 1232,1255 1232,1243 1262,1243 1262,1231 1275,1227 1405,1227'],
  ['#00ffff', lowA, '1420,1191 1445,1194 1485,1195 1485,1201 1525,1201 1525,1213 1568,1213'],
  ['#ff0000', lowB, '5,1251 38,1251 38,1234 55,1230 63,1219 162,1219'],
  ['#00ffff', lowB, '170,1159 246,1159 246,1177 262,1177 262,1180 296,1180 296,1198 435,1198 437,1207 445,1207 445,1213 637,1213'],
  ['#ff0000', lowB, '637,1266 694,1266 694,1246 712,1246 712,1240 718,1227 745,1227 745,1213 770,1213 770,1205 795,1205 800,1200 845,1200 860,1195 895,1190 895,1170 912,1168 930,1156 955,1150 965,1141 1028,1141 1028,1130 1045,1126 1100,1126 1103,1117 1125,1117 1130,1123 1222,1123 1222,1109 1250,1105 1265,1095 1270,1080 1300,1060 1320,1045 1330,1028 1345,1025 1355,1008 1370,1000 1383,1000 1383,979 1441,979 1441,955 1450,955'],
].map(([color, b, text]) => ({ color, pts: poly(points(b, text)) }))
const peaks = [[273, 1601], [291, 1602], [1443, 1662], [2333, 1653]]
const hearts = [[642, 1659], [1731, 1684], [1866, 1684]]
const calls = [
  [315, 1618, '空↓', '#00ff00'], [1232, 1685, '空↓', '#00ff00'], [1546, 1674, '空↓', '#00ff00'],
  [784, 1762, '多↑', '#ffff00'], [1378, 1755, '多↑', '#ffff00'], [2062, 1756, '多↑', '#ffff00'],
]

// Hand-drawn notes laid over every pane.
const boxes = [
  ['#00ff00', 351, 1104, 1076, 1219], ['#00ff00', 1261, 1135, 1393, 1233],
  ['#ff0000', 2000, 811, 2985, 996], ['#ff0000', 2007, 1069, 3017, 1210], ['#00ff00', 1580, 1100, 2013, 1252],
  ['#00ff00', 358, 1389, 897, 1587], ['#00ff00', 1277, 1391, 1416, 1523], ['#00ff00', 1560, 1382, 2004, 1534],
  ['#00ff00', 338, 1617, 843, 1769], ['#00ff00', 1257, 1641, 1376, 1752], ['#00ff00', 1577, 1610, 2113, 1769],
]
const strokes = [
  ['#00ff00', 298, 425, 662, 697], ['#ff0000', 2023, 604, 2853, 219], ['#ff0000', 2034, 903, 2841, 722],
  ['#00ff00', 391, 1135, 922, 1273], ['#00ff00', 1296, 1133, 1384, 1171], ['#00ff00', 1642, 1152, 1894, 1226],
  ['#ff0000', 2060, 1193, 2961, 1055], ['#00ff00', 478, 1429, 882, 1580], ['#00ff00', 1286, 1409, 1392, 1487],
  ['#00ff00', 1624, 1437, 1931, 1504], ['#ff0000', 2020, 1498, 2932, 1344], ['#00ff00', 399, 1656, 802, 1730],
  ['#00ff00', 1275, 1685, 1338, 1728], ['#00ff00', 1644, 1645, 1978, 1751], ['#ff0000', 2110, 1691, 2957, 1546],
].map(([color, x1, y1, x2, y2]) => {
  const angle = (Math.atan2(y2 - y1, x2 - x1) * 180) / Math.PI
  return { color, x1, y1, x2, y2, angle, inX: x2 - 10 * Math.cos((angle * Math.PI) / 180), inY: y2 - 10 * Math.sin((angle * Math.PI) / 180) }
})

const panes = [
  { id: 'price', top: 114, height: 677, grid: [389, 586], title: 'MA组合(5,10,20,40,60,120)', items: [
    ['MA5', '4086.11', '#f0f0f0'], ['MA10', '4085.62', '#e0e000'], ['MA20', '4075.27', '#ff00ff'],
    ['MA40', '4028.92', '#00ff00'], ['MA60', '4008.35', '#808080'], ['MA120', '3953.21', '#ff3b3b']] },
  { id: 'ccl', top: 791, height: 40, grid: [], title: 'CCL', items: [
    ['空头减仓', '73599287296.00', '#00e600'], ['成交额', '99529064448.00', '#f0f0f0']] },
  { id: 'osc', top: 831, height: 239, grid: [874, 970], title: '呵呵', items: [
    ['趋势', '91.38', '#f0f0f0'], ['判断', '91.17', '#e0e000'], ['QS', '91.38', '#ff0000'], ['RIS', '91.17', '#ffff00'],
    ['买入', '0.00', '#ff0000'], ['加仓', '0.00', '#ff00c8'], ['持股', '1.00', '#ffff00'], ['卖出', '0.00', '#ffa500']] },
  { id: 'cross', top: 1070, height: 239, grid: [1121, 1209, 1298], title: '多空变换', items: [
    ['强弱分界', '50.00', '#0000ff'], ['散户', '3.90', '#ffff00'], ['庄家', '90.47', '#ff00ff']] },
  { id: 'macd', top: 1309, height: 239, grid: [1395, 1443, 1491], title: '金叉多死叉空', items: [
    ['', '36.22', '#33ff33'], ['', '32.50', '#ffff00'], ['MACD', '7.43', '#ff00c8']] },
  { id: 'trend', top: 1548, height: 219, grid: [1593, 1646, 1698, 1751], title: '养家糊口。', items: [
    ['LHS', '1.00', '#f0f0f0']] },
]
const isLatin = (s) => /^[\x20-\x7e]*$/.test(s)

const periods = ['5s', '10s', '15s', '30s', '1', '3', '5', '10', '15', '30', '1h', '2h', '3h', '4h', '日', '周', '月', '自']
const tools = [
  { name: '报价', d: 'M4 2H40V42H4ZM9 15H19M25 15H35M9 23H19M25 23H35M9 31H19M25 31H35' },
  { name: '走势', d: 'M2 26L15 12L24 23L40 6M1 35H43' },
  { name: 'K线', d: 'M2 9H18V34H2ZM10 2V9M10 34V43M24 17H41V30H24ZM32 8V17M32 30V34' },
  { name: '闪户', d: 'M12 4H27L20 18H27M12 4L4 23H14L6 40L19 27M31 17V22M24 22H40V33H24M24 22V33L20 43' },
  { name: '下单', d: 'M4 2H40V42H4ZM4 23H9M35 23H40', text: '单' },
  { name: '云端', d: 'M14 34C-1 34 -1 19 8 18C8 0 35 0 36 17C47 20 45 34 31 34', solid: 'M20 17H31L27 25H32L20 43L22 30H15Z' },
  { name: '提醒', d: 'M8 36V19C8 2 36 2 36 19V36M5 36H39M22 2V6M18 41H26' },
]
const moves = [
  { name: '拉开', d: 'M19 10L3 25L19 40ZM25 10L41 25L25 40Z' },
  { name: '收拢', d: 'M4 11L21 25L4 39ZM40 11L23 25L40 39Z' },
  { name: '向左', d: 'M6 25L21 10V20H38V31H21V41Z' },
  { name: '向右', d: 'M38 25L23 10V20H6V31H23V41Z' },
  { name: '向上', d: 'M5 28L22 11L39 28M9 40L22 27L35 40' },
  { name: '向下', d: 'M9 10L22 23L35 10M5 22L22 40L39 22' },
  { name: '间距', d: 'M15 10H29V41H15ZM21 15H29M23 20H29M21 25H29M23 30H29M21 36H29M12 25H0M32 25H44', solid: 'M-3 25L5 18V32ZM47 25L39 18V32Z' },
  { name: '更多', solid: 'M3 25H9V31H3ZM19 25H25V31H19ZM35 25H41V31H35Z' },
]
const menu = ['板块', '账户', '资讯', '个性化', '系统工具', '帮助']

const summary = [
  ['昨日收盘', '4085.77', 'w'], ['今日开盘', '4077.72', 'g'], ['今日最高', '4093.56', 'r'],
  ['今日最低', '4072.39', 'g'], ['总成交量', '3.5亿', 'r'], ['总成交额', '6382.7亿', 'r'],
]
const breadth = [['上涨家数', '1459', 'w'], ['平盘家数', '76', 'w'], ['下跌家数', '704', 'w']]
const mean = [['沪深均价', '22.09', '0.65%', 'r']]
const indices = [
  ['Ａ股指数', '4290.01', '0.14%', 'r'], ['Ｂ股指数', '257.51', '0.20%', 'r'], ['工业指数', '3768.66', '0.61%', 'r'],
  ['商业指数', '2883.08', '-0.47%', 'g'], ['地产指数', '4327.17', '0.54%', 'r'], ['公用指数', '4859.15', '0.37%', 'r'],
  ['综合指数', '3660.37', '-0.85%', 'g'], ['上证180', '10403.84', '0.03%', 'r'], ['基金指数', '7185.05', '0.01%', 'r'],
  ['国债指数', '224.47', '-0.01%', 'g'], ['企债指数', '302.93', '0.01%', 'r'], ['红利指数', '3080.50', '-0.17%', 'g'],
  ['上证50', '3137.83', '-0.23%', 'g'], ['新综指', '3458.48', '0.14%', 'r'],
]
</script>

<template>
  <div class="app">
    <header class="toolbar">
      <div class="tools">
        <button v-for="t in tools" :key="t.name" type="button" class="tool" :aria-label="t.name">
          <svg viewBox="0 0 44 44" class="icon">
            <path :d="t.d" />
            <path v-if="t.solid" :d="t.solid" class="solid" />
            <text v-if="t.text" x="22" y="33" class="glyph">{{ t.text }}</text>
          </svg>
        </button>
        <button v-for="p in periods" :key="p" type="button" class="tool period">{{ p }}</button>
        <button v-for="m in moves" :key="m.name" type="button" class="tool" :aria-label="m.name">
          <svg viewBox="0 0 44 44" class="icon">
            <path v-if="m.d" :d="m.d" />
            <path v-if="m.solid" :d="m.solid" class="solid" />
          </svg>
        </button>
      </div>
      <nav class="menu">
        <a v-for="m in menu" :key="m" href="#">{{ m }}</a>
      </nav>
    </header>

    <div class="body">
      <main class="charts">
        <div class="caption">
          <span>上证指数(SHSE 999001)</span>
          <button type="button" class="cycle">30分钟<svg viewBox="0 0 20 12" class="chev"><path d="M1 1L10 11L19 1" /></svg></button>
        </div>

        <section v-for="p in panes" :key="p.id" class="pane">
          <svg class="plot" :viewBox="`0 ${p.top} 3098 ${p.height}`">
            <line x1="62" :y1="p.top + 0.5" x2="3098" :y2="p.top + 0.5" class="frame" />
            <line x1="61.5" :y1="p.top" x2="61.5" :y2="p.top + p.height" class="frame" />
            <template v-for="g in p.grid" :key="g">
              <line x1="62" :y1="g + 0.5" x2="3098" :y2="g + 0.5" class="grid" />
              <text x="55" :y="g + 10" class="axis">0.00</text>
            </template>
            <line x1="2941.5" :y1="p.id === 'trend' ? 1763 : p.top + p.height - 24" x2="2941.5" :y2="p.top + p.height" class="cursor" />

            <template v-if="p.id === 'price'">
              <path d="M3074 115H3098V139Z" fill="#c0150c" />
              <line x1="3048" y1="209.5" x2="3098" y2="209.5" stroke="#f0f0f0" />
              <g class="crisp">
                <path :d="rising.wick + rising.body" stroke="#ff3b3b" fill="none" />
                <path :d="falling.wick" stroke="#00f0f0" />
                <path :d="falling.body" fill="#00f0f0" />
              </g>
              <polyline v-for="a in averages" :key="a.color" :points="a.pts" :stroke="a.color" class="line crisp" />
              <text x="299" y="314" class="mark hot">4034.08</text>
              <text x="722" y="782" class="mark cold">3816.58</text>
              <text x="1478" y="506" class="mark hot">3936.31</text>
              <text x="1911" y="784" class="mark cold">3815.84</text>
              <text x="2901" y="187" class="mark hot">4098.78</text>
              <text x="62" y="779" class="note">41<tspan class="cjk">天</tspan></text>
              <text x="3093" y="780" class="note end">5<tspan class="cjk">分</tspan>7<tspan class="cjk">秒</tspan></text>
            </template>

            <template v-else-if="p.id === 'osc'">
              <defs>
                <clipPath id="over"><rect x="62" y="832" width="2910" height="138" /></clipPath>
                <clipPath id="under"><rect x="62" y="970" width="2910" height="100" /></clipPath>
              </defs>
              <g clip-path="url(#over)">
                <polygon :points="fastArea" fill="#9b3232" />
                <polyline :points="fastLine" stroke="#ff0000" class="line crisp" />
              </g>
              <g clip-path="url(#under)">
                <polygon :points="fastArea" fill="#006432" />
                <polyline :points="fastLine" stroke="#00e600" class="line crisp" />
              </g>
              <polyline v-for="(s, i) in slow" :key="i" :points="s.pts" :stroke="s.color" :stroke-width="s.width" class="line" />
              <line x1="62" y1="970.5" x2="2967" y2="970.5" stroke="#00ffff" stroke-dasharray="7 2" />
              <line v-for="z in zeroWarm" :key="z[0]" :x1="z[0]" y1="970.5" :x2="z[1]" y2="970.5" stroke="#ffff00" stroke-dasharray="7 2" :stroke-dashoffset="(z[0] - 62) % 9" />
            </template>

            <template v-else-if="p.id === 'cross'">
              <path :d="volumeBars" fill="#808080" />
              <line x1="62" y1="1298" x2="2967" y2="1298" stroke="#808080" stroke-width="2" stroke-dasharray="7 2" />
              <line x1="65" y1="1209.5" x2="2008" y2="1209.5" stroke="#0000ff" />
              <polyline :points="crowd" stroke="#ffff00" class="bold" />
              <polyline :points="banker" stroke="#ff00ff" class="bold" />
              <g v-for="x in [[1056, 1152], [1409, 1202], [2016, 1179]]" :key="x[0]">
                <ellipse :cx="x[0]" :cy="x[1]" rx="7" ry="7" fill="#0a820a" />
                <path :d="`M${x[0] - 3} ${x[1]}v-4h4`" stroke="#d0e8d0" stroke-width="2" fill="none" />
              </g>
            </template>

            <template v-else-if="p.id === 'macd'">
              <path v-for="b in macdBars" :key="b.color" :d="b.d" :fill="b.color" />
              <line x1="62" y1="1443.5" x2="2967" y2="1443.5" stroke="#ffffff" stroke-dasharray="7 2" />
              <polyline :points="diff" stroke="#33ff33" class="line crisp" />
              <polyline :points="dea" stroke="#ffff00" class="line crisp" />
              <template v-for="s in signals" :key="s[0]">
                <path v-if="s[2] === 'down'" :d="`M${s[0] - 2} ${s[1]}h4v10h8l-2 4l-8 6l-8 -6l-2 -4h8z`" fill="#00d200" />
                <path v-else :d="`M${s[0] - 2} ${s[1] + 20}h4v-10h8l-2 -4l-8 -6l-8 6l-2 4h8z`" fill="#ff0000" />
              </template>
            </template>

            <template v-else-if="p.id === 'trend'">
              <polyline v-for="(s, i) in stops" :key="i" :points="s.pts" :stroke="s.color" class="line crisp dashed" />
              <g v-for="(t, i) in trendSets" :key="i" class="crisp">
                <path :d="t.wick" :stroke="t.color" />
                <path :d="t.body" :stroke="t.fill === 'none' ? t.color : 'none'" :fill="t.fill" />
              </g>
              <path v-for="k in peaks" :key="k[0]" :d="`M${k[0]} ${k[1]}l13 10q4 6 1 13q-5 4 -10 0l-4 -5l-4 5q-5 4 -10 0q-3 -7 1 -13z`" fill="#ff7800" />
              <path v-for="k in hearts" :key="k[0]" :d="`M${k[0]} ${k[1] + 25}l-13 -12q-4 -6 -1 -12q5 -4 10 0l4 5l4 -5q5 -4 10 0q3 6 -1 12z`" fill="#0070c0" />
              <text v-for="c in calls" :key="c[0]" :x="c[0]" :y="c[1]" :fill="c[3]" class="call">{{ c[2] }}</text>
            </template>
          </svg>
          <div class="legend">
            <button type="button" class="pick">
              <span :class="{ cjk: p.id !== 'price' && !isLatin(p.title) }">{{ p.title }}</span>
              <svg viewBox="0 0 20 12" class="chev"><path d="M1 1L10 11L19 1" /></svg>
            </button>
            <span v-for="(it, i) in p.items" :key="i" class="item" :style="{ color: it[2] }">
              <span :class="{ cjk: !isLatin(it[0]) }">{{ it[0] }}</span>
              <span>{{ it[1] }}</span>
            </span>
          </div>
        </section>

        <svg class="overlay" viewBox="0 70 3098 1697">
          <rect v-for="(b, i) in boxes" :key="i" :x="b[1] + 4.5" :y="b[2] + 4.5" :width="b[3] - b[1] - 9" :height="b[4] - b[2] - 9" rx="1" :stroke="b[0]" fill="none" stroke-width="9" stroke-linejoin="round" />
          <g v-for="(s, i) in strokes" :key="'s' + i" :stroke="s.color" :fill="s.color">
            <line :x1="s.x1" :y1="s.y1" :x2="s.inX" :y2="s.inY" stroke-width="10" stroke-linecap="round" />
            <path d="M-13 -5L-4 0L-13 5Z" :transform="`translate(${s.x2} ${s.y2}) rotate(${s.angle})`" stroke-width="8" stroke-linejoin="round" />
          </g>
        </svg>
      </main>

      <aside class="quote">
        <div class="head">
          <h1><span>上证指数</span><span class="code">999001</span></h1>
          <button type="button" class="list" aria-label="列表">
            <svg viewBox="0 0 37 29"><path d="M1 1H7V7H1ZM1 11H7V17H1ZM1 21H7V27H1ZM13 4H37M13 14H32M13 24H37" /></svg>
          </button>
        </div>
        <div class="price"><b>4091.42</b><span>+5.65</span><span>+0.14%</span></div>
        <table v-for="(rows, k) in [summary, breadth]" :key="k" :class="['block', k ? '' : 'padded']">
          <tbody>
            <tr v-for="r in rows" :key="r[0]">
              <th scope="row">{{ r[0] }}</th>
              <td :class="r[2]">{{ r[1] }}</td>
            </tr>
          </tbody>
        </table>
        <table v-for="(rows, k) in [mean, indices]" :key="'t' + k" :class="['block', k ? 'last' : '']">
          <tbody>
            <tr v-for="r in rows" :key="r[0]">
              <th scope="row">{{ r[0] }}</th>
              <td :class="['mid', r[3]]">{{ r[1] }}</td>
              <td :class="r[3]">{{ r[2] }}</td>
            </tr>
          </tbody>
        </table>
      </aside>
    </div>
  </div>
</template>

<style>
body {
  margin: 0;
  background: #000;
}
</style>

<style scoped>
.app {
  background: #000;
  color: #e8e8e8;
  font-family: "DejaVu Sans Condensed", "Noto Sans CJK SC", sans-serif;
}
button {
  background: none;
  border: 0;
  padding: 0;
  margin: 0;
  color: inherit;
  font: inherit;
  cursor: pointer;
}
.toolbar {
  display: flex;
  justify-content: space-between;
  height: 70px;
  background: #23262b;
  color: #d0d0d0;
}
.tools {
  display: flex;
  align-items: center;
  height: 64px;
  padding-left: 20px;
}
.tool {
  width: 75px;
  height: 64px;
  display: flex;
  align-items: center;
  justify-content: center;
}
.period {
  font-family: "Liberation Sans Narrow", "Noto Sans CJK SC", sans-serif;
  font-size: 38px;
  font-weight: 300;
}
.icon {
  width: 44px;
  height: 44px;
  overflow: visible;
}
.icon path {
  fill: none;
  stroke: #d0d0d0;
  stroke-width: 2;
}
.icon .solid {
  fill: #d0d0d0;
  stroke: none;
}
.glyph {
  fill: #d0d0d0;
  font-family: "Noto Sans CJK SC", sans-serif;
  font-size: 29px;
  text-anchor: middle;
}
.menu {
  display: flex;
  gap: 26px;
  align-items: center;
  height: 64px;
  padding-right: 47px;
  font-family: "Noto Sans CJK SC", sans-serif;
  font-size: 30px;
}
.menu a {
  color: #c0c4c8;
  text-decoration: none;
  white-space: nowrap;
}
.body {
  display: flex;
  align-items: stretch;
}
.charts {
  position: relative;
  flex: 1;
  min-width: 0;
}
.caption {
  display: flex;
  align-items: center;
  gap: 33px;
  height: 44px;
  font-family: "Liberation Serif", "Noto Sans CJK SC", serif;
  font-size: 30px;
  white-space: nowrap;
}
.cycle,
.pick {
  display: flex;
  align-items: center;
  gap: 8px;
}
.chev {
  width: 20px;
  height: 12px;
  margin-top: 6px;
}
.chev path {
  fill: none;
  stroke: currentColor;
  stroke-width: 2;
}
.pane {
  position: relative;
}
.plot {
  display: block;
  width: 100%;
  height: auto;
}
.overlay {
  position: absolute;
  inset: 0;
  width: 100%;
  height: auto;
  pointer-events: none;
}
.legend {
  position: absolute;
  top: 0;
  left: 73px;
  display: flex;
  align-items: center;
  gap: 18px;
  height: 40px;
  font-size: 29px;
  line-height: 36px;
  white-space: nowrap;
}
.pick {
  color: #e0e000;
}
.item {
  display: flex;
  align-items: center;
  gap: 8px;
}
.legend .cjk {
  font-size: 30px;
}
.frame {
  stroke: #c0150c;
}
.grid {
  stroke: #8c0000;
  stroke-dasharray: 3 3;
}
.cursor {
  stroke: #888;
}
.axis {
  fill: #888;
  font-size: 28px;
  font-weight: bold;
  text-anchor: end;
}
.crisp {
  shape-rendering: crispEdges;
}
.line {
  fill: none;
}
.dashed {
  stroke-dasharray: 6 2;
}
.bold {
  fill: none;
  stroke-width: 5;
  stroke-linejoin: round;
}
.mark {
  font-size: 29px;
  text-anchor: middle;
}
.hot {
  fill: #ff3b3b;
}
.cold {
  fill: #00f0f0;
}
.note {
  fill: #e0e000;
  font-size: 28px;
}
.end {
  text-anchor: end;
}
.call {
  font-family: "Noto Sans CJK SC", sans-serif;
  font-size: 36px;
  font-weight: 300;
}
.quote {
  flex: 0 0 604px;
  box-sizing: border-box;
  border-left: 1px solid #c0150c;
}
.head {
  display: flex;
  align-items: center;
  justify-content: space-between;
  height: 82px;
  padding: 0 24px 0 12px;
}
h1 {
  display: flex;
  align-items: baseline;
  gap: 29px;
  margin: 0;
  color: #e0e000;
  font-family: "Noto Sans", "Noto Sans CJK SC", sans-serif;
  font-size: 54px;
  font-weight: 400;
  line-height: 80px;
}
.code {
  font-size: 56px;
}
.list svg {
  display: block;
  width: 37px;
  height: 29px;
}
.list path {
  fill: none;
  stroke: #b0b0b0;
  stroke-width: 2;
}
.price {
  display: flex;
  align-items: baseline;
  gap: 28px;
  height: 57px;
  padding-left: 4px;
  color: #ff3b3b;
  font-family: "Noto Sans", sans-serif;
  font-size: 37px;
  line-height: 52px;
}
.price b {
  font-size: 49px;
  font-weight: 400;
}
.block {
  width: 100%;
  table-layout: fixed;
  border-collapse: separate;
  border-spacing: 0;
  border-top: 1px solid #c0150c;
}
.padded {
  padding: 1px 0 2px;
}
.last {
  padding-top: 6px;
}
.block th {
  width: 180px;
  height: 55px;
  padding: 0 0 0 3px;
  box-sizing: border-box;
  font-family: "Noto Sans", "Noto Sans CJK SC", sans-serif;
  font-size: 35px;
  font-weight: 400;
  line-height: 50px;
  text-align: left;
  white-space: nowrap;
}
.block td {
  height: 55px;
  padding: 0 4px 0 0;
  box-sizing: border-box;
  font-size: 30px;
  font-weight: bold;
  line-height: 50px;
  text-align: right;
  white-space: nowrap;
}
.block .mid {
  width: 150px;
  padding: 0;
}
.w {
  color: #e8e8e8;
}
.r {
  color: #ff3b3b;
}
.g {
  color: #00e600;
}
</style>
